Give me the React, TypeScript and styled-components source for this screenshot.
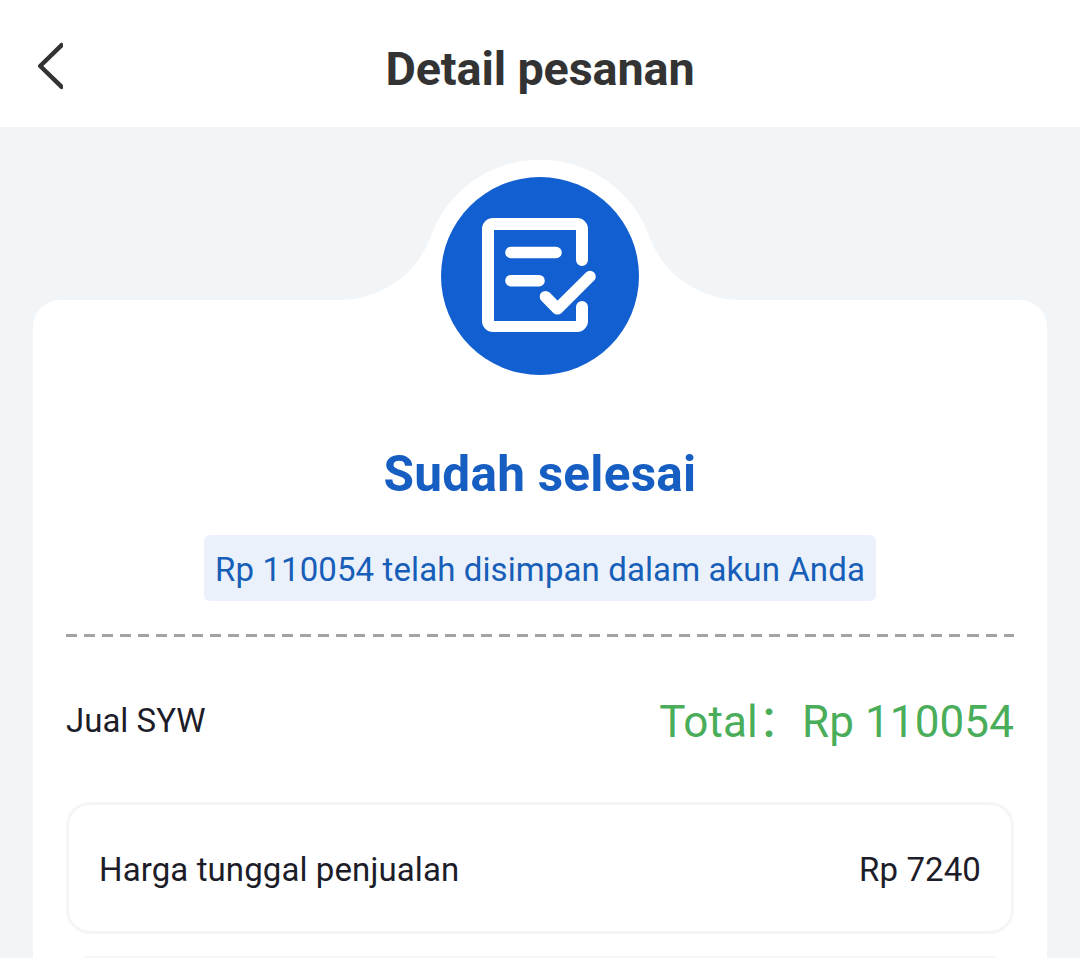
import React from "react";
import styled, { createGlobalStyle } from "styled-components";

interface PriceRow {
    label: string;
    value: string;
}

const rows: PriceRow[] = [{ label: "Harga tunggal penjualan", value: "Rp 7240" }];

const BackIcon = () => (
    <svg width="26" height="50" viewBox="0 0 26 50" fill="none">
        <path
            d="M24.6 5.2L3.2 26L24.6 46.8"
            stroke="#333333"
            strokeWidth="4.4"
            strokeLinecap="round"
            strokeLinejoin="round"
        />
    </svg>
);

const StatusBadge = () => (
    <BadgeSvg width="400" height="216" viewBox="340 160 400 216" fill="none">
        <path
            d="M340 301V300A97 97 0 0 0 431 236A116 116 0 0 1 649 236A97 97 0 0 0 740 300V301Z"
            fill="#ffffff"
        />
        <circle cx="540" cy="276" r="99" fill="#115fd0" />
        <path
            d="M493 218H577A11 11 0 0 1 588 229V260A6 6 0 0 1 576 260V230H494V321H576V307A6 6 0 0 1 588 307V321A11 11 0 0 1 577 332H493A11 11 0 0 1 482 321V229A11 11 0 0 1 493 218Z"
            fill="#ffffff"
        />
        <g stroke="#ffffff" strokeWidth="11.6" strokeLinecap="round" strokeLinejoin="round">
            <path d="M511 252.5H556" />
            <path d="M511 280.7H539" />
            <path d="M545.5 296.7L557.5 308.8L590 276.5" />
        </g>
    </BadgeSvg>
);

const App = () => {
    return (
        <Page>
            <GlobalStyle />
            <Header>
                <BackButton aria-label="Kembali">
                    <BackIcon />
                </BackButton>
                <Title>Detail pesanan</Title>
            </Header>
            <Card>
                <StatusBadge />
                <Status>Sudah selesai</Status>
                <Notice>Rp 110054 telah disimpan dalam akun Anda</Notice>
                <Divider />
                <Summary>
                    <Coin>Jual SYW</Coin>
                    <Total>Total：Rp 110054</Total>
                </Summary>
                <Rows>
                    {rows.map((row) => (
                        <Row key={row.label}>
                            <span>{row.label}</span>
                            <span>{row.value}</span>
                        </Row>
                    ))}
                    <Row />
                </Rows>
            </Card>
        </Page>
    );
};

const GlobalStyle = createGlobalStyle`
    * {
        box-sizing: border-box;
    }

    body {
        margin: 0;
        background: #f1f5f8;
        color: #1d1d29;
        font-family: Roboto, "Noto Sans CJK SC", sans-serif;
        font-size: 33px;
        letter-spacing: 0.1px;
    }
`;

const Page = styled.div`
    display: flex;
    flex-direction: column;
    width: 1080px;
    height: 958px;
    overflow: hidden;
`;

const Header = styled.header`
    display: grid;
    grid-template-columns: 100px 1fr 100px;
    flex: none;
    height: 127px;
    padding-top: 5px;
    background: #ffffff;
`;

const BackButton = styled.button`
    display: flex;
    align-items: flex-start;
    padding: 35px 0 0 37px;
    border: 0;
    background: none;
`;

const Title = styled.h1`
    margin: 0;
    color: #333333;
    font-size: 46.75px;
    font-weight: 700;
    letter-spacing: -0.12px;
    line-height: 128px;
    text-align: center;
`;

const Card = styled.main`
    display: flex;
    flex-direction: column;
    align-items: center;
    flex: none;
    margin: 173px 33px 0;
    padding: 0 33px;
    border-radius: 27px 27px 0 0;
    background: #ffffff;
`;

const BadgeSvg = styled.svg`
    flex: none;
    margin-top: -140px;
`;

const Status = styled.h2`
    margin: 65px 0 0;
    color: #175ec2;
    font-size: 49.5px;
    font-weight: 700;
    letter-spacing: 0.25px;
    line-height: 66px;
`;

const Notice = styled.p`
    height: 66px;
    margin: 28px 0 0;
    padding: 0 11px;
    border-radius: 6px;
    background: #eaf1fb;
    color: #175eb8;
    line-height: 69px;
    white-space: nowrap;
`;

const Divider = styled.div`
    align-self: stretch;
    height: 3px;
    margin-top: 33px;
    background: repeating-linear-gradient(to right, #a3a3a3 0 11px, transparent 11px 18.03px);
`;

const Summary = styled.div`
    display: flex;
    align-items: center;
    justify-content: space-between;
    align-self: stretch;
    height: 165px;
    padding-top: 2px;
`;

const Coin = styled.span`
    letter-spacing: 0;
`;

const Total = styled.span`
    padding-top: 3px;
    color: #49ad5a;
    font-size: 44px;
    line-height: 52px;
    white-space: nowrap;
`;

const Rows = styled.div`
    display: flex;
    flex-direction: column;
    align-self: stretch;
    gap: 22px;
`;

const Row = styled.div`
    display: flex;
    align-items: center;
    justify-content: space-between;
    height: 132px;
    padding: 3px 30px 0;
    border: 3px solid #f4f5f6;
    border-radius: 24px;
`;

export default App;
